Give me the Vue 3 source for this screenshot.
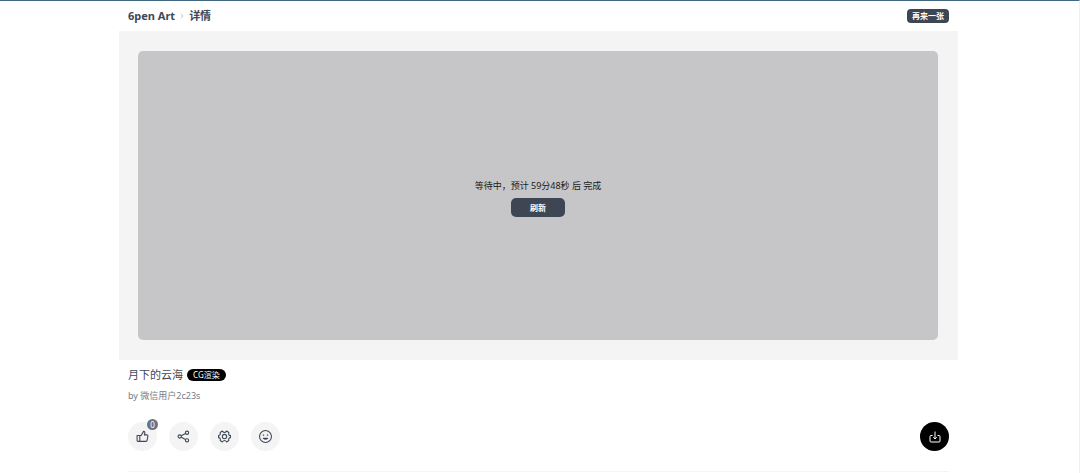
<script setup>
import { ref } from 'vue'

const likes = ref(0)
const remaining = ref('59分48秒')
</script>

<template>
  <div class="page">
    <main class="container">
      <header class="header">
        <nav class="crumbs" aria-label="导航">
          <a href="#">6pen Art</a>
          <svg class="chevron" viewBox="0 0 8 8" aria-hidden="true"><path d="M2.5 1 5.5 4 2.5 7" /></svg>
          <span>详情</span>
        </nav>
        <button type="button" class="again">再来一张</button>
      </header>

      <section class="stage">
        <div class="canvas">
          <p class="status">等待中，预计 {{ remaining }} 后 完成</p>
          <button type="button" class="refresh">刷新</button>
        </div>
      </section>

      <section class="details">
        <div class="title-row">
          <h1>月下的云海</h1>
          <span class="tag">CG渲染</span>
        </div>
        <p class="author">by 微信用户2c23s</p>

        <div class="actions">
          <button type="button" class="round" aria-label="点赞">
            <svg viewBox="0 0 24 24" aria-hidden="true">
              <path d="M2 10h5v11H3.500a1.500 1.500 0 0 1-1.500-1.500zM7 10h2.500L14 2.500c1.800 0 2.700 1.300 2.400 2.800L15.500 9H20a2 2 0 0 1 2 2.400l-1.500 7.800A2.200 2.200 0 0 1 18.300 21H7" />
            </svg>
            <span class="badge">{{ likes }}</span>
          </button>
          <button type="button" class="round" aria-label="分享">
            <svg viewBox="0 0 24 24" aria-hidden="true">
              <circle cx="5" cy="12" r="3" />
              <circle cx="18.500" cy="5" r="3" />
              <circle cx="18.500" cy="19" r="3" />
              <path d="m7.700 10.600 8.100-4.200M7.700 13.400l8.100 4.200" />
            </svg>
          </button>
          <button type="button" class="round" aria-label="设置">
            <svg viewBox="0 0 24 24" aria-hidden="true">
              <path d="M8 2q2 2.500 4 2.500T16 2l4 2.500q-.8 3 .2 4.500T23 10v4q-1.800 0-2.800 1.500T20 19.500L16 22q-2-2.500-4-2.500T8 22l-4-2.500q.8-2.500-.2-4T1 14v-4q1.800 0 2.800-1.500T4 4.500z" />
              <circle cx="12" cy="12" r="4" />
            </svg>
          </button>
          <button type="button" class="round" aria-label="表情">
            <svg viewBox="0 0 24 24" aria-hidden="true">
              <circle cx="12" cy="12" r="11" />
              <path d="M7 9.500h2.500M14.500 9.500H17M8 15.500q4 3 8 0z" />
            </svg>
          </button>
          <button type="button" class="round download" aria-label="下载">
            <svg viewBox="0 0 24 24" aria-hidden="true">
              <path d="M7 9H4a2 2 0 0 0-2 2v9a2 2 0 0 0 2 2h16a2 2 0 0 0 2-2v-9a2 2 0 0 0-2-2h-3M12 1v14M8.500 12.500l3.500 3.500 3.500-3.500" />
            </svg>
          </button>
        </div>
        <hr />
      </section>
    </main>
  </div>
</template>

<style>
html,
body {
  background: #fff;
}
</style>

<style scoped>
.page {
  box-sizing: border-box;
  min-height: 100vh;
  padding-right: 2px;
  border-top: 1px solid #3f6982;
  border-right: 1px solid #f0f0f0;
  color: #3f4856;
  font-family: "Noto Sans", "Noto Sans CJK SC", sans-serif;
}

button {
  padding: 0;
  border: 0;
  font: inherit;
  cursor: pointer;
}

h1,
p {
  margin: 0;
  font-weight: 400;
}

.container {
  max-width: 839px;
  margin: 0 auto;
}

.header {
  display: flex;
  align-items: center;
  justify-content: space-between;
  height: 30px;
  padding: 0 9px;
}

.crumbs {
  display: flex;
  align-items: center;
  gap: 4px;
  font-size: 11px;
  line-height: 16px;
  font-weight: 700;
}

.crumbs a {
  color: inherit;
  text-decoration: none;
}

.chevron {
  width: 6px;
  height: 6px;
  fill: none;
  stroke: #a4a8ae;
  stroke-width: 1;
}

.again,
.refresh {
  background: #3f4653;
  color: #fff;
  font-size: 8px;
  font-weight: 700;
}

.again {
  height: 14px;
  padding: 0 5px;
  border-radius: 4px;
  line-height: 14px;
}

.stage {
  padding: 20px 20px 20px 19px;
  background: #f4f4f4;
}

.canvas {
  display: flex;
  box-sizing: border-box;
  flex-direction: column;
  align-items: center;
  justify-content: center;
  gap: 4px;
  min-height: 289px;
  padding-top: 4px;
  border-radius: 5px;
  background: #c6c6c8;
}

.status {
  color: #202020;
  font-size: 9px;
  line-height: 16px;
}

.refresh {
  width: 54px;
  height: 19px;
  border-radius: 5px;
  line-height: 19px;
}

.details {
  padding: 6px 9px 0;
}

.title-row {
  display: flex;
  align-items: center;
  gap: 4px;
}

h1 {
  font-size: 11px;
  line-height: 18px;
}

.tag {
  padding: 0 6px;
  border-radius: 6px;
  background: #000;
  color: #fff;
  font-size: 8px;
  line-height: 12px;
}

.author {
  margin-top: 4px;
  color: #747b87;
  font-size: 9px;
  line-height: 16px;
}

.actions {
  display: flex;
  gap: 12px;
  margin-top: 18px;
}

.round {
  position: relative;
  display: flex;
  align-items: center;
  justify-content: center;
  width: 29px;
  height: 29px;
  border-radius: 50%;
  background: #f4f4f4;
  color: #3f4856;
}

.round svg {
  width: 13px;
  height: 13px;
  overflow: visible;
  fill: none;
  stroke: currentColor;
  stroke-width: 2;
  stroke-linejoin: round;
}

.badge {
  position: absolute;
  top: -3px;
  right: -1px;
  width: 11px;
  height: 11px;
  border-radius: 50%;
  background: #697382;
  color: #fff;
  font-size: 8px;
  line-height: 11px;
  text-align: center;
}

.round.download {
  margin-left: auto;
  background: #000;
  color: #fff;
}

.round.download svg {
  width: 12px;
  height: 12px;
}

hr {
  height: 1px;
  margin: 20px 0 0;
  border: 0;
  background: #f4f4f4;
}
</style>
